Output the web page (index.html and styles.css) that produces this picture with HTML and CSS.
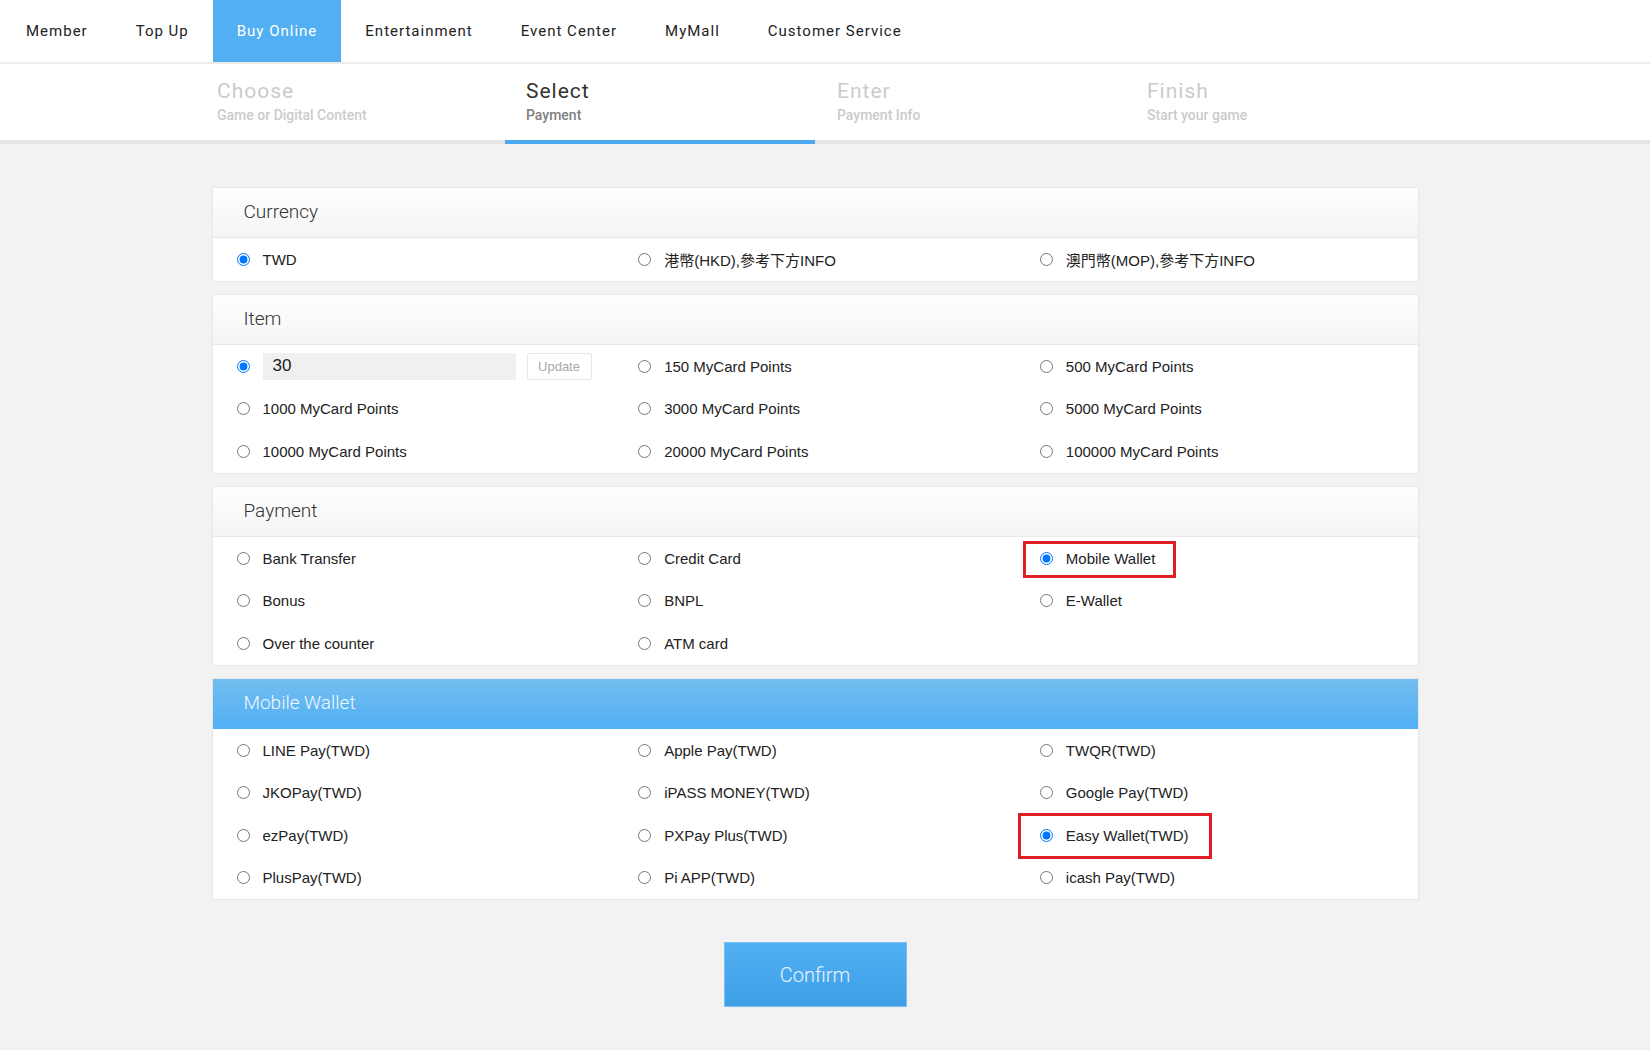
FILE: index.html
```html
<!DOCTYPE html>
<html lang="en">
<head>
    <meta charset="UTF-8">
    <meta name="viewport" content="width=device-width, initial-scale=1.0">
    <title>Buy Online - Select Payment</title>
    <link rel="stylesheet" href="styles.css">
</head>
<body>
    <nav class="topnav">
        <a href="#">Member</a>
        <a href="#">Top Up</a>
        <a href="#" class="active">Buy Online</a>
        <a href="#">Entertainment</a>
        <a href="#">Event Center</a>
        <a href="#">MyMall</a>
        <a href="#">Customer Service</a>
    </nav>

    <div class="steps-bar">
        <div class="steps">
            <div class="step">
                <div class="step-title">Choose</div>
                <div class="step-sub">Game or Digital Content</div>
            </div>
            <div class="step active">
                <div class="step-title">Select</div>
                <div class="step-sub">Payment</div>
            </div>
            <div class="step">
                <div class="step-title">Enter</div>
                <div class="step-sub">Payment Info</div>
            </div>
            <div class="step">
                <div class="step-title">Finish</div>
                <div class="step-sub">Start your game</div>
            </div>
        </div>
    </div>

    <main class="content">
        <section class="card">
            <div class="card-head">Currency</div>
            <div class="options">
                <label class="opt"><input type="radio" name="currency" checked><span>TWD</span></label>
                <label class="opt"><input type="radio" name="currency"><span>港幣(HKD),參考下方INFO</span></label>
                <label class="opt"><input type="radio" name="currency"><span>澳門幣(MOP),參考下方INFO</span></label>
            </div>
        </section>

        <section class="card">
            <div class="card-head">Item</div>
            <div class="options">
                <div class="opt">
                    <input type="radio" name="item" checked>
                    <input type="text" class="amount" value="30">
                    <button type="button" class="update">Update</button>
                </div>
                <label class="opt"><input type="radio" name="item"><span>150 MyCard Points</span></label>
                <label class="opt"><input type="radio" name="item"><span>500 MyCard Points</span></label>
                <label class="opt"><input type="radio" name="item"><span>1000 MyCard Points</span></label>
                <label class="opt"><input type="radio" name="item"><span>3000 MyCard Points</span></label>
                <label class="opt"><input type="radio" name="item"><span>5000 MyCard Points</span></label>
                <label class="opt"><input type="radio" name="item"><span>10000 MyCard Points</span></label>
                <label class="opt"><input type="radio" name="item"><span>20000 MyCard Points</span></label>
                <label class="opt"><input type="radio" name="item"><span>100000 MyCard Points</span></label>
            </div>
        </section>

        <section class="card">
            <div class="card-head">Payment</div>
            <div class="options">
                <label class="opt"><input type="radio" name="pay"><span>Bank Transfer</span></label>
                <label class="opt"><input type="radio" name="pay"><span>Credit Card</span></label>
                <label class="opt"><input type="radio" name="pay" checked><span>Mobile Wallet</span><i class="mark mark-pay"></i></label>
                <label class="opt"><input type="radio" name="pay"><span>Bonus</span></label>
                <label class="opt"><input type="radio" name="pay"><span>BNPL</span></label>
                <label class="opt"><input type="radio" name="pay"><span>E-Wallet</span></label>
                <label class="opt"><input type="radio" name="pay"><span>Over the counter</span></label>
                <label class="opt"><input type="radio" name="pay"><span>ATM card</span></label>
            </div>
        </section>

        <section class="card blue">
            <div class="card-head">Mobile Wallet</div>
            <div class="options">
                <label class="opt"><input type="radio" name="wallet"><span>LINE Pay(TWD)</span></label>
                <label class="opt"><input type="radio" name="wallet"><span>Apple Pay(TWD)</span></label>
                <label class="opt"><input type="radio" name="wallet"><span>TWQR(TWD)</span></label>
                <label class="opt"><input type="radio" name="wallet"><span>JKOPay(TWD)</span></label>
                <label class="opt"><input type="radio" name="wallet"><span>iPASS MONEY(TWD)</span></label>
                <label class="opt"><input type="radio" name="wallet"><span>Google Pay(TWD)</span></label>
                <label class="opt"><input type="radio" name="wallet"><span>ezPay(TWD)</span></label>
                <label class="opt"><input type="radio" name="wallet"><span>PXPay Plus(TWD)</span></label>
                <label class="opt"><input type="radio" name="wallet" checked><span>Easy Wallet(TWD)</span><i class="mark mark-wallet"></i></label>
                <label class="opt"><input type="radio" name="wallet"><span>PlusPay(TWD)</span></label>
                <label class="opt"><input type="radio" name="wallet"><span>Pi APP(TWD)</span></label>
                <label class="opt"><input type="radio" name="wallet"><span>icash Pay(TWD)</span></label>
            </div>
        </section>

        <button type="button" class="confirm">Confirm</button>
    </main>
</body>
</html>
```

FILE: styles.css
```css
body {
    margin: 0;
    background-color: #f2f2f2;
    font-family: "Liberation Sans", Arial, "Noto Sans CJK TC", sans-serif;
    color: #222;
}

.topnav {
    display: flex;
    height: 62px;
    padding-left: 2px;
    background-color: #fff;
    border-bottom: 2px solid #ececec;
}
.topnav a {
    padding: 0 24px;
    line-height: 62px;
    font-family: Roboto, sans-serif;
    font-size: 15px;
    letter-spacing: 1px;
    color: #222;
    text-decoration: none;
}
.topnav a.active {
    background-color: #52aff2;
    color: #fff;
}

.steps-bar {
    background-color: #fff;
    box-shadow: inset 0 -4px 0 #e5e5e5;
    padding-right: 20px;
}
.steps {
    display: flex;
    width: 1240px;
    margin: 0 auto;
}
.step {
    width: 310px;
    height: 80px;
    box-sizing: border-box;
    padding: 15px 0 0 22px;
    font-family: Roboto, sans-serif;
    color: #cbcbcb;
}
.step.active {
    box-shadow: inset 0 -4px 0 #4daaf0;
    padding-left: 21px;
}
.step-title {
    font-size: 21px;
    line-height: 24px;
    letter-spacing: 1px;
}
.step-sub {
    margin-top: 4px;
    font-size: 14px;
    font-weight: 500;
}
.step.active .step-title {
    color: #333;
}
.step.active .step-sub {
    color: #808080;
}

.content {
    padding: 43px 20px 40px 0;
}
.card {
    width: 1207px;
    margin: 0 auto 12.5px;
    box-sizing: border-box;
    background-color: #fff;
    border: 1px solid #e6e6e6;
}
.card-head {
    height: 49px;
    line-height: 48px;
    padding-left: 31px;
    background: linear-gradient(#fff, #f4f4f4);
    border-bottom: 1px solid #e8e8e8;
    font-family: Roboto, sans-serif;
    font-weight: 300;
    font-size: 19px;
    color: #333;
}
.card.blue .card-head {
    background: linear-gradient(#73bdf0, #52b0f4);
    border-bottom-color: #52b0f4;
    color: #f0f8ff;
}

.options {
    display: grid;
    grid-template-columns: repeat(3, 1fr);
}
.opt {
    position: relative;
    display: flex;
    align-items: center;
    height: 42.5px;
    padding-left: 24px;
    font-size: 15px;
    cursor: pointer;
}
.opt input[type="radio"] {
    width: 13px;
    height: 13px;
    margin: 0 13px 0 0;
}
.amount {
    width: 253px;
    height: 27px;
    box-sizing: border-box;
    padding: 0 10px;
    border: none;
    background-color: #f0f0f0;
    font-family: "Liberation Sans", Arial, sans-serif;
    font-size: 17px;
    color: #222;
}
.update {
    width: 65px;
    height: 27px;
    margin-left: 11px;
    background-color: #fff;
    border: 1px solid #e6e6e6;
    border-radius: 2px;
    font-family: "Liberation Sans", Arial, sans-serif;
    font-size: 13px;
    color: #aaa;
}

/* red highlight boxes */
.mark {
    position: absolute;
    box-sizing: border-box;
    border: 3px solid #e01e26;
    pointer-events: none;
}
.mark-pay {
    left: 7px;
    top: calc(50% - 17px);
    width: 153px;
    height: 37px;
}
.mark-wallet {
    left: 2px;
    top: calc(50% - 22px);
    width: 194px;
    height: 46px;
}

.confirm {
    display: block;
    width: 183px;
    height: 65px;
    margin: 42px auto 0;
    background: linear-gradient(#51b0f3, #3f9fe6);
    border: 1px solid #7cc0f2;
    font-family: Roboto, sans-serif;
    font-weight: 300;
    font-size: 20px;
    color: #e8f4ff;
    cursor: pointer;
}
```
